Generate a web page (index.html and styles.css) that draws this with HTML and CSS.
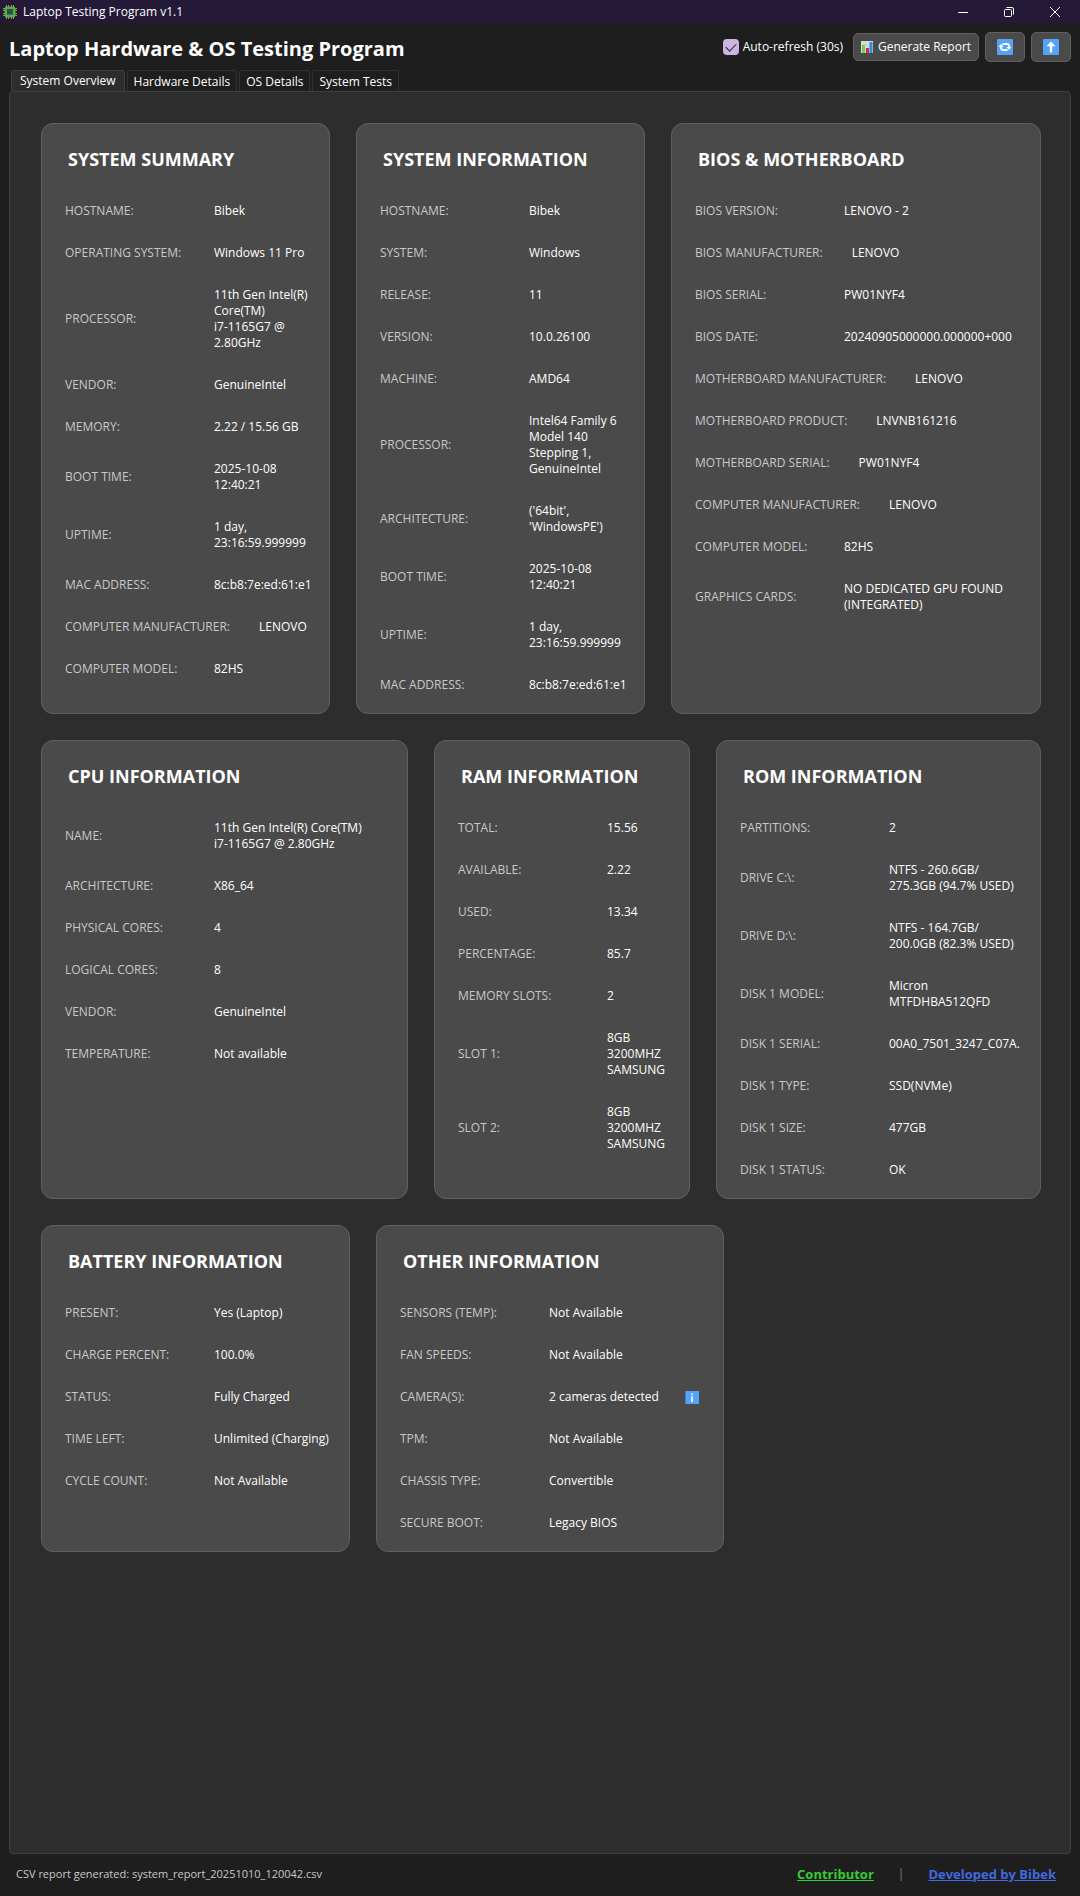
FILE: index.html
```html
<!DOCTYPE html>
<html lang="en">
<head>
<meta charset="utf-8">
<meta name="viewport" content="width=device-width, initial-scale=1">
<title>Laptop Testing Program v1.1</title>
<link rel="stylesheet" href="styles.css">
</head>
<body>
<header class="titlebar">
  <svg class="app-icon" viewBox="0 0 14 14" aria-hidden="true">
    <path d="M3.5 0v14M5.5 0v14M8.5 0v14M10.5 0v14M0 3.5h14M0 5.5h14M0 8.5h14M0 10.5h14" stroke="#c98a1c" stroke-width="1"/>
    <rect x="1.5" y="1.5" width="11" height="11" rx="2" fill="#4caf50"/>
    <rect x="4" y="4" width="6" height="5.5" fill="#37474f"/>
  </svg>
  <span class="titlebar-text">Laptop Testing Program v1.1</span>
  <div class="window-controls">
    <button class="window-button" type="button" aria-label="Minimize"><svg viewBox="0 0 12 12"><path d="M1 6.5h10"/></svg></button>
    <button class="window-button" type="button" aria-label="Restore"><svg viewBox="0 0 12 12"><rect x="1.5" y="3.5" width="7" height="7" rx="1"/><path d="M3.5 1.5H9a1.5 1.5 0 0 1 1.5 1.5v5.500"/></svg></button>
    <button class="window-button" type="button" aria-label="Close"><svg viewBox="0 0 12 12"><path d="M1 1l10 10M11 1L1 11"/></svg></button>
  </div>
</header>

<div class="toolbar">
  <h1 class="app-title">Laptop Hardware &amp; OS Testing Program</h1>
  <label class="auto-refresh"><input class="check" type="checkbox" checked>Auto-refresh (30s)</label>
  <button class="button report" type="button">
    <svg class="chart" viewBox="0 0 12 12" aria-hidden="true"><rect width="12" height="12" fill="#d9dee2"/><path d="M4 0v12M8 0v12M0 4h12M0 8h12" stroke="#b8c0c8" stroke-width=".5"/><rect x="1" y="4" width="3" height="8" fill="#7ecb4b"/><rect x="5" y="7" width="3" height="5" fill="#d8245c"/><rect x="8.500" y="1" width="3" height="11" fill="#2e8fd8"/></svg>
    Generate Report
  </button>
  <button class="button square" type="button" aria-label="Refresh">
    <svg class="emoji" viewBox="0 0 16 16"><rect width="16" height="16" rx="1" fill="#55a3f8"/><path d="M5.500 5H10a2 2 0 0 1 2 2v1.500M10.500 11H6a2 2 0 0 1-2-2V7.500" fill="none" stroke="#fff" stroke-width="1.800"/><path d="M9.300 8h5.200L12 11zM1.500 8h5.200L4 5z" fill="#fff"/></svg>
  </button>
  <button class="button square" type="button" aria-label="Export">
    <svg class="emoji" viewBox="0 0 16 16"><rect width="16" height="16" rx="1" fill="#55a3f8"/><path d="M8 2.500l4.500 4.800H9.200V13.500H6.800V7.300H3.500z" fill="#fff"/></svg>
  </button>
</div>

<nav class="tabs" role="tablist">
  <button class="tab active" type="button" role="tab" aria-selected="true">System Overview</button>
  <button class="tab" type="button" role="tab">Hardware Details</button>
  <button class="tab" type="button" role="tab">OS Details</button>
  <button class="tab" type="button" role="tab">System Tests</button>
</nav>

<main class="panel">
  <div class="cards cards-top">
    <section class="card">
      <h2>SYSTEM SUMMARY</h2>
      <dl>
        <div><dt>HOSTNAME:</dt><dd>Bibek</dd></div>
        <div><dt>OPERATING SYSTEM:</dt><dd>Windows 11 Pro</dd></div>
        <div><dt>PROCESSOR:</dt><dd>11th Gen Intel(R)<br>Core(TM)<br>i7-1165G7 @<br>2.80GHz</dd></div>
        <div><dt>VENDOR:</dt><dd>GenuineIntel</dd></div>
        <div><dt>MEMORY:</dt><dd>2.22 / 15.56 GB</dd></div>
        <div><dt>BOOT TIME:</dt><dd>2025-10-08<br>12:40:21</dd></div>
        <div><dt>UPTIME:</dt><dd>1 day,<br>23:16:59.999999</dd></div>
        <div><dt>MAC ADDRESS:</dt><dd>8c:b8:7e:ed:61:e1</dd></div>
        <div><dt>COMPUTER MANUFACTURER:</dt><dd>LENOVO</dd></div>
        <div><dt>COMPUTER MODEL:</dt><dd>82HS</dd></div>
      </dl>
    </section>
    <section class="card">
      <h2>SYSTEM INFORMATION</h2>
      <dl>
        <div><dt>HOSTNAME:</dt><dd>Bibek</dd></div>
        <div><dt>SYSTEM:</dt><dd>Windows</dd></div>
        <div><dt>RELEASE:</dt><dd>11</dd></div>
        <div><dt>VERSION:</dt><dd>10.0.26100</dd></div>
        <div><dt>MACHINE:</dt><dd>AMD64</dd></div>
        <div><dt>PROCESSOR:</dt><dd>Intel64 Family 6<br>Model 140<br>Stepping 1,<br>GenuineIntel</dd></div>
        <div><dt>ARCHITECTURE:</dt><dd>('64bit',<br>'WindowsPE')</dd></div>
        <div><dt>BOOT TIME:</dt><dd>2025-10-08<br>12:40:21</dd></div>
        <div><dt>UPTIME:</dt><dd>1 day,<br>23:16:59.999999</dd></div>
        <div><dt>MAC ADDRESS:</dt><dd>8c:b8:7e:ed:61:e1</dd></div>
      </dl>
    </section>
    <section class="card">
      <h2>BIOS &amp; MOTHERBOARD</h2>
      <dl>
        <div><dt>BIOS VERSION:</dt><dd>LENOVO - 2</dd></div>
        <div><dt>BIOS MANUFACTURER:</dt><dd>LENOVO</dd></div>
        <div><dt>BIOS SERIAL:</dt><dd>PW01NYF4</dd></div>
        <div><dt>BIOS DATE:</dt><dd>20240905000000.000000+000</dd></div>
        <div><dt>MOTHERBOARD MANUFACTURER:</dt><dd>LENOVO</dd></div>
        <div><dt>MOTHERBOARD PRODUCT:</dt><dd>LNVNB161216</dd></div>
        <div><dt>MOTHERBOARD SERIAL:</dt><dd>PW01NYF4</dd></div>
        <div><dt>COMPUTER MANUFACTURER:</dt><dd>LENOVO</dd></div>
        <div><dt>COMPUTER MODEL:</dt><dd>82HS</dd></div>
        <div><dt>GRAPHICS CARDS:</dt><dd>NO DEDICATED GPU FOUND<br>(INTEGRATED)</dd></div>
      </dl>
    </section>
  </div>

  <div class="cards cards-middle">
    <section class="card">
      <h2>CPU INFORMATION</h2>
      <dl>
        <div><dt>NAME:</dt><dd>11th Gen Intel(R) Core(TM)<br>i7-1165G7 @ 2.80GHz</dd></div>
        <div><dt>ARCHITECTURE:</dt><dd>X86_64</dd></div>
        <div><dt>PHYSICAL CORES:</dt><dd>4</dd></div>
        <div><dt>LOGICAL CORES:</dt><dd>8</dd></div>
        <div><dt>VENDOR:</dt><dd>GenuineIntel</dd></div>
        <div><dt>TEMPERATURE:</dt><dd>Not available</dd></div>
      </dl>
    </section>
    <section class="card">
      <h2>RAM INFORMATION</h2>
      <dl>
        <div><dt>TOTAL:</dt><dd>15.56</dd></div>
        <div><dt>AVAILABLE:</dt><dd>2.22</dd></div>
        <div><dt>USED:</dt><dd>13.34</dd></div>
        <div><dt>PERCENTAGE:</dt><dd>85.7</dd></div>
        <div><dt>MEMORY SLOTS:</dt><dd>2</dd></div>
        <div><dt>SLOT 1:</dt><dd>8GB<br>3200MHZ<br>SAMSUNG</dd></div>
        <div><dt>SLOT 2:</dt><dd>8GB<br>3200MHZ<br>SAMSUNG</dd></div>
      </dl>
    </section>
    <section class="card">
      <h2>ROM INFORMATION</h2>
      <dl>
        <div><dt>PARTITIONS:</dt><dd>2</dd></div>
        <div><dt>DRIVE C:\:</dt><dd>NTFS - 260.6GB/<br>275.3GB (94.7% USED)</dd></div>
        <div><dt>DRIVE D:\:</dt><dd>NTFS - 164.7GB/<br>200.0GB (82.3% USED)</dd></div>
        <div><dt>DISK 1 MODEL:</dt><dd>Micron<br>MTFDHBA512QFD</dd></div>
        <div><dt>DISK 1 SERIAL:</dt><dd>00A0_7501_3247_C07A.</dd></div>
        <div><dt>DISK 1 TYPE:</dt><dd>SSD(NVMe)</dd></div>
        <div><dt>DISK 1 SIZE:</dt><dd>477GB</dd></div>
        <div><dt>DISK 1 STATUS:</dt><dd>OK</dd></div>
      </dl>
    </section>
  </div>

  <div class="cards cards-bottom">
    <section class="card">
      <h2>BATTERY INFORMATION</h2>
      <dl>
        <div><dt>PRESENT:</dt><dd>Yes (Laptop)</dd></div>
        <div><dt>CHARGE PERCENT:</dt><dd>100.0%</dd></div>
        <div><dt>STATUS:</dt><dd>Fully Charged</dd></div>
        <div><dt>TIME LEFT:</dt><dd>Unlimited (Charging)</dd></div>
        <div><dt>CYCLE COUNT:</dt><dd>Not Available</dd></div>
      </dl>
    </section>
    <section class="card">
      <h2>OTHER INFORMATION</h2>
      <dl>
        <div><dt>SENSORS (TEMP):</dt><dd>Not Available</dd></div>
        <div><dt>FAN SPEEDS:</dt><dd>Not Available</dd></div>
        <div><dt>CAMERA(S):</dt><dd class="with-info">2 cameras detected
          <button class="info" type="button" aria-label="Camera details"><svg viewBox="0 0 14 13"><rect width="14" height="13" fill="#55a3f8"/><path d="M.5 0v13" stroke="#3a7fe0"/><path d="M6.200 2.500h1.600v1.600H6.200zM6.200 5.200h1.600v5.800H6.200z" fill="#fff"/></svg></button></dd></div>
        <div><dt>TPM:</dt><dd>Not Available</dd></div>
        <div><dt>CHASSIS TYPE:</dt><dd>Convertible</dd></div>
        <div><dt>SECURE BOOT:</dt><dd>Legacy BIOS</dd></div>
      </dl>
    </section>
  </div>
</main>

<footer class="statusbar">
  <span class="status">CSV report generated: system_report_20251010_120042.csv</span>
  <a class="link contributor" href="#contributor">Contributor</a>
  <span class="divider">|</span>
  <a class="link developer" href="#developer">Developed by Bibek</a>
</footer>
</body>
</html>
```
FILE: styles.css
```css
* { box-sizing: border-box; }

body {
  margin: 0;
  min-height: 100vh;
  display: flex;
  flex-direction: column;
  background: #1e1e1e;
  color: #fff;
  font: 12px/16px "Open Sans", "Noto Sans", sans-serif;
}

button { font: inherit; color: inherit; padding: 0; cursor: pointer; }
h1, h2, dl, dd { margin: 0; }
svg { display: block; }

.titlebar {
  display: flex;
  align-items: center;
  height: 23px;
  padding: 0 2px 0 3px;
  background: #241937;
}
.app-icon { width: 14px; height: 14px; }
.titlebar-text { margin-left: 6px; }
.window-controls { display: flex; margin-left: auto; }
.window-button {
  display: grid;
  place-items: center;
  width: 46px;
  height: 20px;
  border: 0;
  background: none;
}
.window-button svg { width: 12px; height: 12px; fill: none; stroke: #fff; }

.toolbar {
  display: flex;
  align-items: center;
  padding: 9px 9px 8px;
}
.app-title {
  margin-right: auto;
  padding-top: 3px;
  font-size: 20px;
  line-height: 27px;
  font-weight: 700;
}
.auto-refresh { display: flex; align-items: center; gap: 4px; margin-right: 10px; }
.check {
  appearance: none;
  width: 16px;
  height: 16px;
  margin: 0;
  border-radius: 4px;
  background: #cdb4e3;
  display: grid;
  place-items: center;
}
.check:checked::before {
  content: "";
  width: 9px;
  height: 5px;
  margin-bottom: 3px;
  border: solid #2b2433;
  border-width: 0 0 1px 1px;
  transform: rotate(-45deg);
}
.button {
  display: flex;
  align-items: center;
  justify-content: center;
  border: 1px solid #606060;
  border-radius: 5px;
  background: #4a4a4a;
}
.report { width: 126px; height: 28px; gap: 5px; margin-right: 6px; white-space: nowrap; }
.square { width: 40px; height: 30px; }
.square + .square { margin-left: 6px; }
.chart { width: 12px; height: 12px; }
.emoji { width: 16px; height: 16px; }

.tabs { display: flex; align-items: flex-end; gap: 2px; padding: 0 11px; }
.tab {
  height: 21px;
  padding: 2px 6px 0;
  border: 1px solid #323232;
  border-bottom: 0;
  border-radius: 3px 3px 0 0;
  background: #1e1e1e;
}
.tab.active { padding: 0 8px; border-color: #3f3f3f; background: #2d2d2d; }

.panel {
  flex: 1;
  display: flex;
  flex-direction: column;
  gap: 26px;
  margin: 0 9px;
  padding: 31px 29px;
  padding-left: 31px;
  border: 1px solid #3f3f3f;
  border-radius: 4px;
  background: #2d2d2d;
}
.cards { display: grid; gap: 26px; }
.cards-top { grid-template-columns: 289fr 289fr 370fr; }
.cards-middle { grid-template-columns: 367fr 256fr 325fr; }
.cards-bottom { grid-template-columns: 309fr 348fr 291fr; }

.card {
  min-width: 0;
  padding: 0 24px 7px 23px;
  border: 1px solid #606060;
  border-radius: 12px;
  background: #4a4a4a;
}
.card h2 {
  padding: 23px 0 19px 3px;
  font-size: 18px;
  line-height: 24px;
  font-weight: 700;
  white-space: nowrap;
}
.card dl > div { display: flex; align-items: center; padding: 13px 0; }
.card dt {
  flex: none;
  min-width: 149px;
  padding-right: 29px;
  color: #c8c8c8;
  white-space: nowrap;
}
.card dd { flex: 1; font-weight: 500; white-space: nowrap; }
.card .with-info { display: flex; align-items: center; justify-content: space-between; }
.info { width: 14px; height: 13px; border: 0; background: none; }

.statusbar {
  display: flex;
  align-items: center;
  height: 42px;
  padding: 0 24px 2px 16px;
}
.status { margin-right: auto; color: #c8c8c8; font-size: 11px; }
.link { font-size: 13px; font-weight: 700; text-decoration: underline; }
.contributor { color: #32cd32; }
.developer { color: #4169e1; }
.divider { margin: 0 24px; color: #808080; }
```
